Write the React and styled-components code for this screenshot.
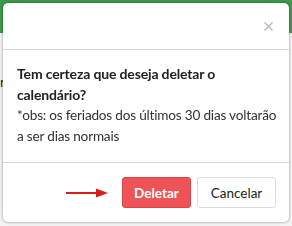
import React from "react";
import styled, { createGlobalStyle } from "styled-components";

const GlobalStyle = createGlobalStyle`
  html, body {
    margin: 0;
    padding: 0;
    width: 292px;
    height: 226px;
    overflow: hidden;
    font-family: Lato, "Open Sans", sans-serif;
  }
`;

const Page = styled.div`
  width: 292px;
  height: 226px;
  background: #f4f4f4;
  display: flex;
  flex-direction: column;
`;

const TopBar = styled.div`
  height: 33px;
  background: #3d9b4c;
`;

const PageBody = styled.div`
  flex: 1;
  padding: 40px 0 0 0;
  font-size: 13px;
  color: #222;
  line-height: 18px;
`;

const Overlay = styled.div`
  position: fixed;
  inset: 0;
  padding: 3px;
  display: flex;
  align-items: flex-start;
`;

const Modal = styled.div`
  width: 286px;
  height: 219px;
  background: #fff;
  border-radius: 5px;
  box-shadow: 0 0 3px rgba(0, 0, 0, 0.45);
  display: flex;
  flex-direction: column;
  overflow: hidden;
`;

const Header = styled.div`
  height: 47px;
  border-bottom: 1px solid #d6d6d6;
  display: flex;
  justify-content: flex-end;
  align-items: center;
  padding-right: 14px;
  box-sizing: border-box;
  flex-shrink: 0;
`;

const Close = styled.button`
  border: none;
  background: none;
  padding: 0;
  width: 14px;
  height: 14px;
  display: flex;
  align-items: center;
  justify-content: center;
`;

const Body = styled.div`
  padding: 14px 8px 16px 14px;
  border-bottom: 1px solid #d6d6d6;
  color: #222;
  font-size: 14px;
  line-height: 20.5px;
  letter-spacing: -0.15px;
`;

const Question = styled.div`
  font-weight: 700;
`;

const Note = styled.div`
  color: #333;
  font-size: 13.6px;
  letter-spacing: -0.2px;
`;

const Footer = styled.div`
  flex: 1;
  display: flex;
  justify-content: flex-end;
  align-items: center;
  gap: 6px;
  padding: 0 13px 0 0;
`;

const Button = styled.button`
  height: 31px;
  border-radius: 3px;
  font-family: Lato, "Open Sans", sans-serif;
  font-size: 13.5px;
  padding: 0;
  width: ${(p) => p.$w}px;
  background: ${(p) => (p.$danger ? "#ef5358" : "#fff")};
  border: 1px solid ${(p) => (p.$danger ? "#d9444a" : "#dcdcdc")};
  color: ${(p) => (p.$danger ? "#fff" : "#222")};
  font-weight: ${(p) => (p.$danger ? 700 : 400)};
`;

const Arrow = styled.svg`
  width: 46px;
  height: 12px;
  margin-right: 6px;
`;

export default function App() {
  return (
    <>
      <GlobalStyle />
      <Page>
        <TopBar />
        <PageBody>r</PageBody>
      </Page>
      <Overlay>
        <Modal>
          <Header>
            <Close aria-label="Fechar">
              <svg width="9" height="9" viewBox="0 0 9 9">
                <path d="M0.5 0.5 L8.5 8.5 M8.5 0.5 L0.5 8.5" stroke="#b9b9b9" strokeWidth="1.4" />
              </svg>
            </Close>
          </Header>
          <Body>
            <Question>Tem certeza que deseja deletar o calendário?</Question>
            <Note>*obs: os feriados dos últimos 30 dias voltarão a ser dias normais</Note>
          </Body>
          <Footer>
            <Arrow viewBox="0 0 46 12">
              <path d="M2 6 H34" stroke="#d91c1c" strokeWidth="2" />
              <path d="M32 1.5 L44 6 L32 10.5 Z" fill="#d91c1c" />
            </Arrow>
            <Button $danger $w={69}>Deletar</Button>
            <Button $w={79}>Cancelar</Button>
          </Footer>
        </Modal>
      </Overlay>
    </>
  );
}
